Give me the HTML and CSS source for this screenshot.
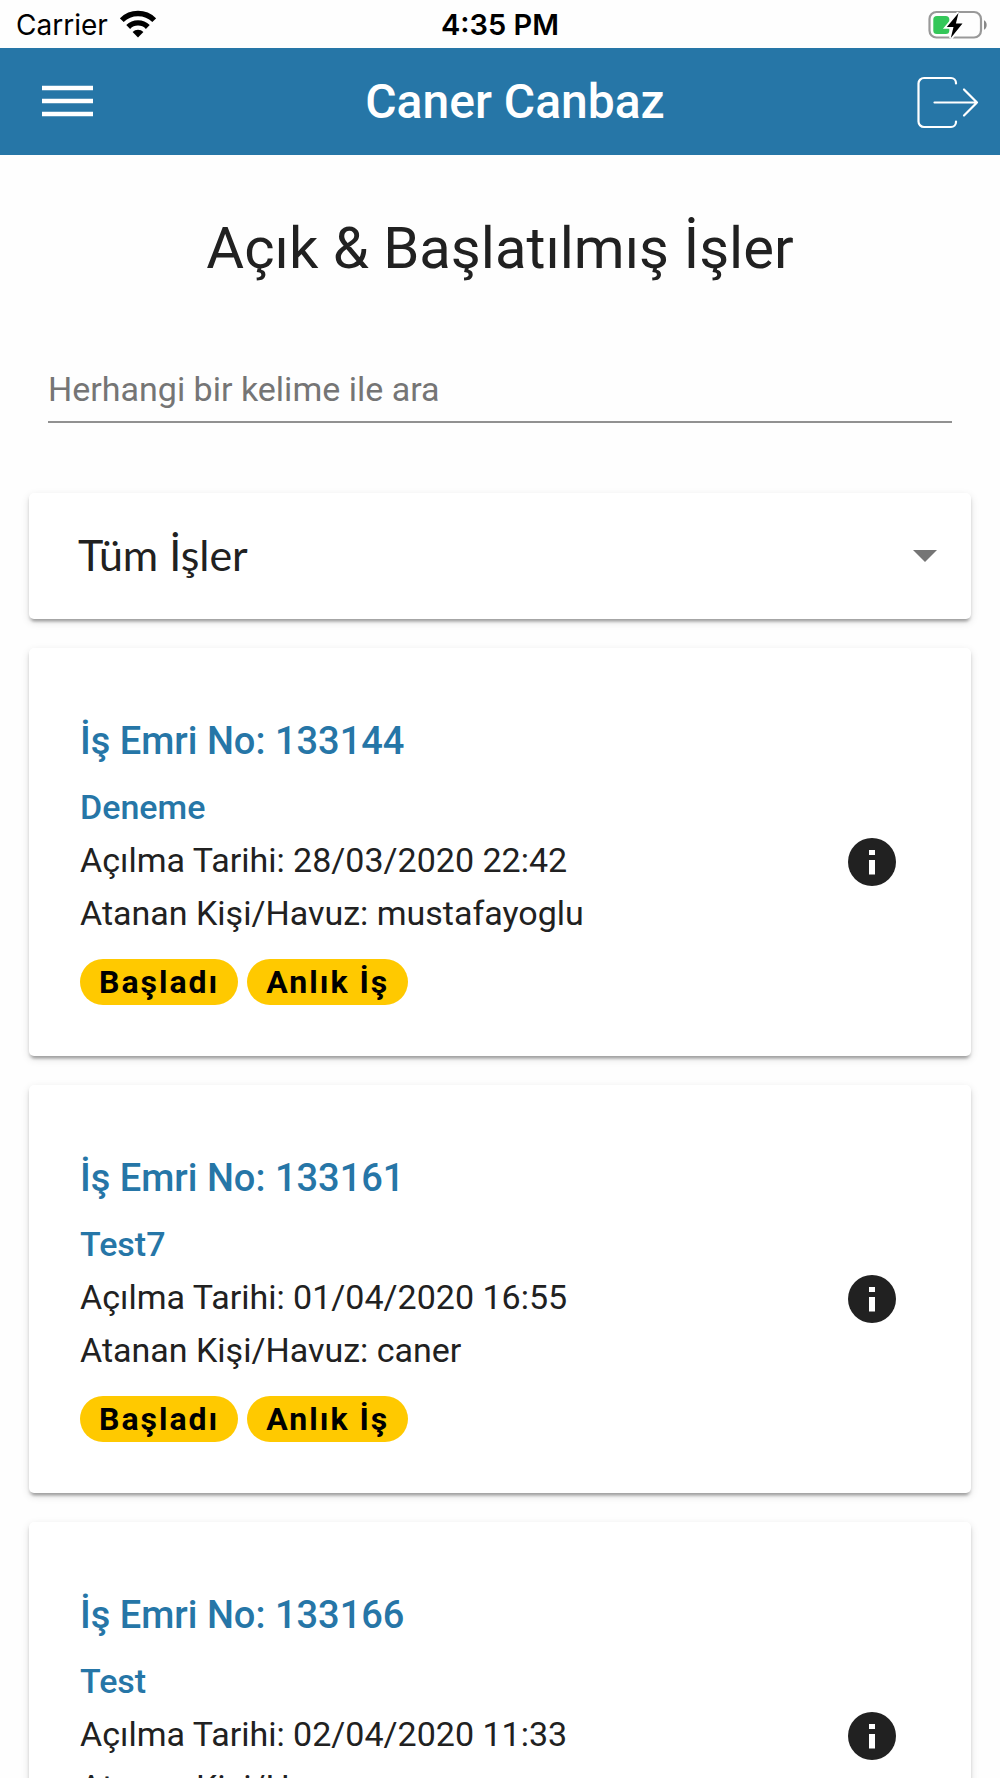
FILE: index.html
```html
<!DOCTYPE html>
<html lang="tr">
<head>
<meta charset="utf-8">
<meta name="viewport" content="width=device-width, initial-scale=1">
<title>Açık &amp; Başlatılmış İşler</title>
<link rel="stylesheet" href="styles.css">
</head>
<body>
<div class="status-bar">
  <div class="status-carrier">
    <span>Carrier</span>
    <svg class="wifi" width="36" height="28" viewBox="0 0 36 28" aria-hidden="true">
      <path d="M1.800 10.200a23 23 0 0 1 32.400 0" fill="none" stroke="#000" stroke-width="5.400"/>
      <path d="M8.200 17a13.700 13.700 0 0 1 19.600 0" fill="none" stroke="#000" stroke-width="5.400"/>
      <path d="M18 27.500l-5.400-5.600a7.700 7.700 0 0 1 10.800 0z"/>
    </svg>
  </div>
  <div class="status-time">4:35 PM</div>
  <div class="status-battery">
    <svg width="60" height="30" viewBox="0 0 60 30" aria-hidden="true">
      <rect x="2.500" y="2" width="51.500" height="25.500" rx="7" fill="none" stroke="#999" stroke-width="2.200"/>
      <rect x="6.300" y="6" width="16" height="18" rx="3.500" fill="#34c759"/>
      <path d="M57 10.200c3.600 1.800 3.600 7.800 0 9.600z" fill="#888"/>
      <path d="M31.500 3L19.800 17h6.700L23.800 28 35.500 13.500h-6.600z" fill="#000" stroke="#fff" stroke-width="3.600" paint-order="stroke"/>
    </svg>
  </div>
</div>

<header class="toolbar">
  <button class="icon-button" type="button" aria-label="Menü">
    <svg width="51" height="34" viewBox="0 0 51 34" aria-hidden="true">
      <path d="M0 3h51M0 16h51M0 29h51" stroke="#fff" stroke-width="4.400"/>
    </svg>
  </button>
  <div class="toolbar-title">Caner Canbaz</div>
  <button class="icon-button" type="button" aria-label="Çıkış">
    <svg width="62" height="54" viewBox="0 0 62 54" fill="none" stroke="#fff" stroke-width="2.200" stroke-linecap="round" aria-hidden="true">
      <path d="M39 8.500V8a5 5 0 0 0-5-5H7a5.500 5.500 0 0 0-5.500 5.500v38A5.500 5.500 0 0 0 7 52h27a5 5 0 0 0 5-5v-.500"/>
      <path d="M17.500 27.500H60M47 14.500l13 13-13 13" stroke-linejoin="round"/>
    </svg>
  </button>
</header>

<main class="page">
  <h1 class="page-title">Açık &amp; Başlatılmış İşler</h1>
  <input class="search" type="search" placeholder="Herhangi bir kelime ile ara" aria-label="Herhangi bir kelime ile ara">

  <div class="card-list">
    <div class="card filter">
      <select class="filter-select" aria-label="İş filtresi">
        <option>Tüm İşler</option>
      </select>
      <svg class="filter-arrow" width="24" height="12" viewBox="0 0 24 12" aria-hidden="true"><path d="M0 0h24L12 12z" fill="#757575"/></svg>
    </div>

    <article class="card job">
      <div class="job-text">
        <h2 class="job-number">İş Emri No: 133144</h2>
        <h3 class="job-name">Deneme</h3>
        <p class="job-line">Açılma Tarihi: 28/03/2020 22:42</p>
        <p class="job-line">Atanan Kişi/Havuz: mustafayoglu</p>
        <div class="badges"><span class="badge">Başladı</span><span class="badge">Anlık İş</span></div>
      </div>
      <button class="icon-button job-info" type="button" aria-label="Bilgi">
        <svg width="48" height="48" viewBox="0 0 48 48" aria-hidden="true"><circle cx="24" cy="24" r="24" fill="#212121"/><path d="M21 12h6v5h-6zM21 22h6v14.500h-6z" fill="#fff"/></svg>
      </button>
    </article>

    <article class="card job">
      <div class="job-text">
        <h2 class="job-number">İş Emri No: 133161</h2>
        <h3 class="job-name">Test7</h3>
        <p class="job-line">Açılma Tarihi: 01/04/2020 16:55</p>
        <p class="job-line">Atanan Kişi/Havuz: caner</p>
        <div class="badges"><span class="badge">Başladı</span><span class="badge">Anlık İş</span></div>
      </div>
      <button class="icon-button job-info" type="button" aria-label="Bilgi">
        <svg width="48" height="48" viewBox="0 0 48 48" aria-hidden="true"><circle cx="24" cy="24" r="24" fill="#212121"/><path d="M21 12h6v5h-6zM21 22h6v14.500h-6z" fill="#fff"/></svg>
      </button>
    </article>

    <article class="card job">
      <div class="job-text">
        <h2 class="job-number">İş Emri No: 133166</h2>
        <h3 class="job-name">Test</h3>
        <p class="job-line">Açılma Tarihi: 02/04/2020 11:33</p>
        <p class="job-line">Atanan Kişi/Havuz: caner</p>
        <div class="badges"><span class="badge">Başladı</span><span class="badge">Anlık İş</span></div>
      </div>
      <button class="icon-button job-info" type="button" aria-label="Bilgi">
        <svg width="48" height="48" viewBox="0 0 48 48" aria-hidden="true"><circle cx="24" cy="24" r="24" fill="#212121"/><path d="M21 12h6v5h-6zM21 22h6v14.500h-6z" fill="#fff"/></svg>
      </button>
    </article>
  </div>
</main>
</body>
</html>
```
FILE: styles.css
```css
* {
  box-sizing: border-box;
}

html {
  height: 100%;
}

body {
  display: flex;
  flex-direction: column;
  height: 100%;
  margin: 0;
  overflow: hidden;
  background: #fefefe;
  color: #212121;
  font-family: Roboto, "Liberation Sans", sans-serif;
  font-size: 34px;
  line-height: 53px;
}

h1,
h2,
h3,
p {
  margin: 0;
}

.status-bar {
  display: grid;
  grid-template-columns: 1fr auto 1fr;
  align-items: center;
  flex: none;
  height: 48px;
  padding: 2px 13px 0;
  color: #000;
  font-family: Inter, "Liberation Sans", sans-serif;
  font-size: 28px;
  line-height: 34px;
}

.status-carrier {
  display: flex;
  align-items: center;
  gap: 12px;
  padding-left: 3px;
}

.wifi {
  margin-bottom: 2px;
}

.status-time {
  font-size: 29px;
  font-weight: 600;
}

.status-battery {
  display: flex;
  justify-content: flex-end;
}

.toolbar {
  display: flex;
  align-items: center;
  flex: none;
  height: 107px;
  padding: 0 21px 0 42px;
  background: #2676a7;
  color: #fff;
}

.toolbar-title {
  flex: 1;
  padding-left: 20px;
  font-size: 48px;
  font-weight: 500;
  text-align: center;
}

.icon-button {
  display: flex;
  flex: none;
  padding: 0;
  border: 0;
  background: none;
  color: inherit;
  cursor: pointer;
}

.page {
  flex: 1;
  min-height: 0;
  padding: 59px 29px 29px;
  overflow-y: auto;
  scrollbar-width: none;
}

.page-title {
  font-size: 58px;
  font-weight: 400;
  line-height: 68px;
  text-align: center;
}

.search {
  display: block;
  width: calc(100% - 38px);
  height: 60px;
  margin: 81px auto 70px;
  padding: 0 0 6px;
  border: 0;
  border-bottom: 2px solid #919191;
  border-radius: 0;
  outline: 0;
  appearance: none;
  background: none;
  color: inherit;
  font: inherit;
}

.search::placeholder {
  color: #757575;
  opacity: 1;
}

.card-list {
  display: flex;
  flex-direction: column;
  gap: 29px;
}

.card {
  border-radius: 5px;
  background: #fff;
  box-shadow: 0 5px 3px -3px rgba(0, 0, 0, 0.2), 0 3px 3px rgba(0, 0, 0, 0.14), 0 3px 8px rgba(0, 0, 0, 0.12);
}

.filter {
  display: grid;
  align-items: center;
}

.filter-select {
  grid-area: 1 / 1;
  width: 100%;
  height: 126px;
  padding: 0 80px 4px 49px;
  border: 0;
  appearance: none;
  background: none;
  color: inherit;
  font-family: Lato, "Liberation Sans", sans-serif;
  font-size: 43px;
}

.filter-arrow {
  grid-area: 1 / 1;
  justify-self: end;
  margin-right: 34px;
  pointer-events: none;
}

.job {
  display: flex;
  align-items: center;
  justify-content: space-between;
  padding: 67px 75px 51px 51px;
}

.job-info {
  margin-top: 3px;
}

.job-number {
  margin-bottom: 13px;
  color: #2676a7;
  font-size: 38px;
  font-weight: 500;
  line-height: 53px;
}

.job-name {
  color: #2676a7;
  font-size: 34px;
  font-weight: 500;
}

.badges {
  display: flex;
  gap: 9px;
  margin-top: 19px;
}

.badge {
  padding: 0 19px;
  border-radius: 23px;
  background: #ffc900;
  color: #000;
  font-size: 32px;
  font-weight: 700;
  letter-spacing: 2px;
  line-height: 46px;
}
```
